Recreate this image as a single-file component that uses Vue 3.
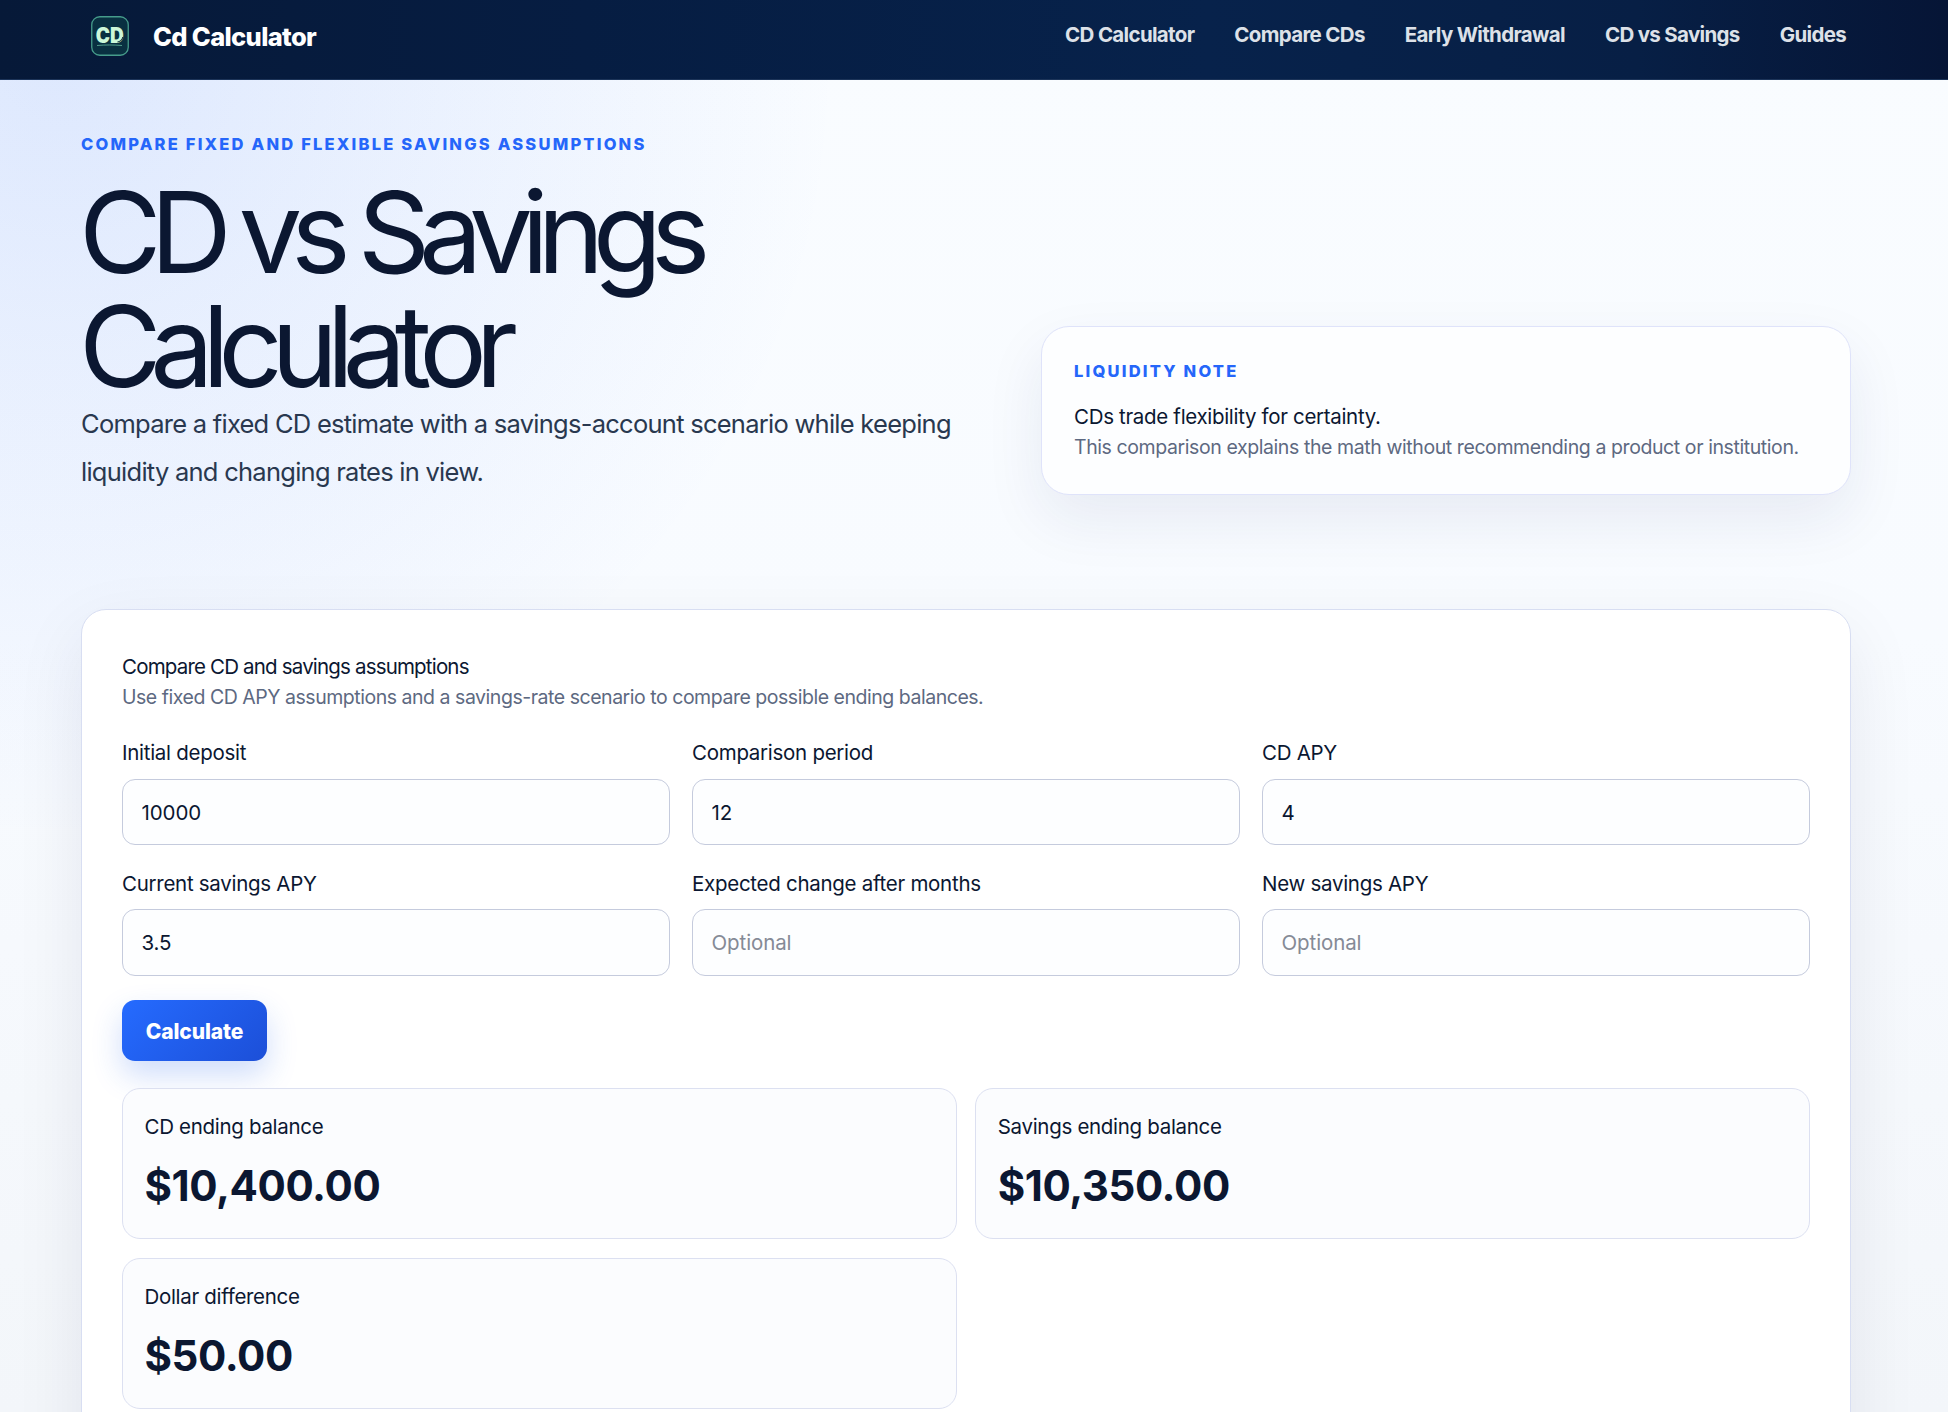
<script setup>
const nav = ['CD Calculator', 'Compare CDs', 'Early Withdrawal', 'CD vs Savings', 'Guides']
const fields = [
  { label: 'Initial deposit', value: '10000' },
  { label: 'Comparison period', value: '12' },
  { label: 'CD APY', value: '4' },
  { label: 'Current savings APY', value: '3.5' },
  { label: 'Expected change after months', value: '' },
  { label: 'New savings APY', value: '' },
]
const results = [
  { label: 'CD ending balance', value: '$10,400.00' },
  { label: 'Savings ending balance', value: '$10,350.00' },
  { label: 'Dollar difference', value: '$50.00' },
]
</script>

<template>
  <div class="page">
    <header class="top">
      <div class="brand">
        <svg class="logo" viewBox="0 0 38 40">
          <rect x=".75" y=".75" width="36.5" height="38.5" rx="8" fill="#093041" stroke="#469c8b" stroke-width="1.3" />
          <text x="18.8" y="26.5" text-anchor="middle" textLength="28" lengthAdjust="spacingAndGlyphs" class="logo-text">CD</text>
          <path d="M26.5 26c3-.6 4.8-2.5 5.3-5" fill="none" stroke="#093041" stroke-width="1.1" />
          <path d="M6 29.5c8-.7 17-.7 25 0" fill="none" stroke="#4f9a8b" stroke-width="1" />
        </svg>
        <span class="brand-name">Cd Calculator</span>
      </div>
      <nav class="nav">
        <a v-for="n in nav" :key="n">{{ n }}</a>
      </nav>
    </header>

    <section class="hero">
      <div class="intro">
        <p class="eyebrow">COMPARE FIXED AND FLEXIBLE SAVINGS ASSUMPTIONS</p>
        <h1>CD vs Savings<br />Calculator</h1>
        <p class="lead">Compare a fixed CD estimate with a savings-account scenario while keeping<br />liquidity and changing rates in view.</p>
      </div>
      <aside class="note">
        <p class="eyebrow">LIQUIDITY NOTE</p>
        <p class="note-title">CDs trade flexibility for certainty.</p>
        <p class="note-text">This comparison explains the math without recommending a product or institution.</p>
      </aside>
    </section>

    <main class="panel">
      <h2>Compare CD and savings assumptions</h2>
      <p class="hint">Use fixed CD APY assumptions and a savings-rate scenario to compare possible ending balances.</p>
      <div class="fields">
        <label v-for="f in fields" :key="f.label" class="field">
          <span>{{ f.label }}</span>
          <input :value="f.value" placeholder="Optional" />
        </label>
      </div>
      <button class="btn" type="button">Calculate</button>
      <div class="results">
        <div v-for="r in results" :key="r.label" class="result">
          <p class="r-label">{{ r.label }}</p>
          <p class="r-value">{{ r.value }}</p>
        </div>
      </div>
    </main>
  </div>
</template>

<style>
html,
body {
  margin: 0;
  overflow: hidden;
}
</style>

<style scoped>
* {
  box-sizing: border-box;
}
p,
h1,
h2 {
  margin: 0;
  font-weight: 400;
}
.page {
  height: 1412px;
  overflow: hidden;
  font-family: Inter, "Liberation Sans", sans-serif;
  color: #0b1731;
  background:
    radial-gradient(circle at 60px 60px, rgba(37, 99, 245, 0.13), rgba(37, 99, 245, 0) 780px),
    linear-gradient(180deg, #f9fcff 0, #f8fbff 45%, #f3f6fa 100%);
}
.top {
  height: 80px;
  border-bottom: 1px solid #1c3459;
  background: linear-gradient(90deg, #061938 0, #061d42 30%, #07224b 62%, #071f45 84%, #061536 100%);
  display: flex;
  justify-content: space-between;
  padding: 0 102px 0 91px;
}
.brand {
  display: flex;
  align-items: center;
  height: 72px;
  gap: 24px;
}
.logo {
  width: 38px;
  height: 40px;
}
.logo-text {
  font: 900 21px Inter, sans-serif;
  fill: #cdf7d8;
}
.brand-name {
  padding-top: 1px;
  color: #fff;
  font-size: 25.5px;
  font-weight: 800;
  letter-spacing: -0.65px;
}
.nav {
  display: flex;
  gap: 40px;
  align-items: center;
  height: 69px;
  font-size: 20.5px;
  font-weight: 680;
  letter-spacing: -0.67px;
  color: #dde1e8;
}
.hero {
  display: flex;
  justify-content: space-between;
  align-items: flex-end;
  padding: 52px 97px 0 81px;
}
.eyebrow {
  font-size: 16.5px;
  line-height: 24px;
  font-weight: 800;
  letter-spacing: 2.2px;
  color: #2566fa;
}
h1 {
  margin: 19px 0 0 -2px;
  font-size: 113px;
  line-height: 114px;
  letter-spacing: -11.4px;
  word-spacing: -1.8px;
}
.lead {
  margin-top: -3px;
  font-size: 25.5px;
  line-height: 47.6px;
  letter-spacing: -0.74px;
  color: #29384f;
  white-space: nowrap;
}
.note {
  width: 810px;
  height: 169px;
  padding: 32px 32px 0;
  border: 1px solid #dfe3fa;
  border-radius: 28px;
  background: #fdfeff;
  box-shadow: 0 24px 60px rgba(30, 41, 100, 0.08);
}
.note-title {
  margin-top: 18.5px;
  font-size: 20.5px;
  line-height: 30px;
  letter-spacing: -0.32px;
}
.note-text {
  font-size: 19.5px;
  line-height: 30px;
  letter-spacing: -0.41px;
  color: #5d6981;
  white-space: nowrap;
}
.panel {
  height: 900px;
  margin: 114px 97px 0 81px;
  padding: 41.5px 40px 0;
  border: 1px solid #d8def2;
  border-radius: 25px;
  background: #fff;
  box-shadow: 0 24px 70px rgba(15, 30, 70, 0.08);
}
h2 {
  font-size: 20.5px;
  line-height: 30px;
  letter-spacing: -0.82px;
}
.hint {
  font-size: 19.5px;
  line-height: 30px;
  letter-spacing: -0.47px;
  color: #5d6981;
}
.fields {
  display: grid;
  grid-template-columns: repeat(3, 1fr);
  gap: 23.5px 22px;
  margin-top: 26.5px;
}
.field {
  display: flex;
  flex-direction: column;
  gap: 10.5px;
  font-size: 20.5px;
  line-height: 30px;
  letter-spacing: -0.28px;
}
.field input {
  height: 66.5px;
  width: 100%;
  padding: 1px 18.5px 0;
  border: 1px solid #c5cbdd;
  border-radius: 13px;
  background: #fdfeff;
  color: #0b1731;
  font: 20.5px Inter, sans-serif;
  letter-spacing: -0.1px;
}
.field input::placeholder {
  color: #858a96;
}
.btn {
  display: block;
  width: 145px;
  height: 61px;
  margin-top: 23.9px;
  padding: 2px 0 0;
  border: 0;
  border-radius: 13px;
  background: linear-gradient(135deg, #256bff, #1c4fd8);
  box-shadow: 0 14px 30px rgba(37, 99, 235, 0.22);
  color: #fff;
  font: 800 21px Inter, sans-serif;
  letter-spacing: -0.1px;
}
.results {
  display: grid;
  grid-template-columns: 1fr 1fr;
  gap: 18.5px;
  margin-top: 27px;
}
.result {
  height: 151.5px;
  padding: 23px 21.5px 0;
  border: 1px solid #dce0f1;
  border-radius: 18px;
  background: #fbfcfe;
}
.r-label {
  font-size: 20.5px;
  line-height: 30px;
  letter-spacing: -0.31px;
}
.r-value {
  margin-top: 19px;
  font-size: 42px;
  line-height: 50px;
  font-weight: 700;
  letter-spacing: -0.42px;
}
</style>
